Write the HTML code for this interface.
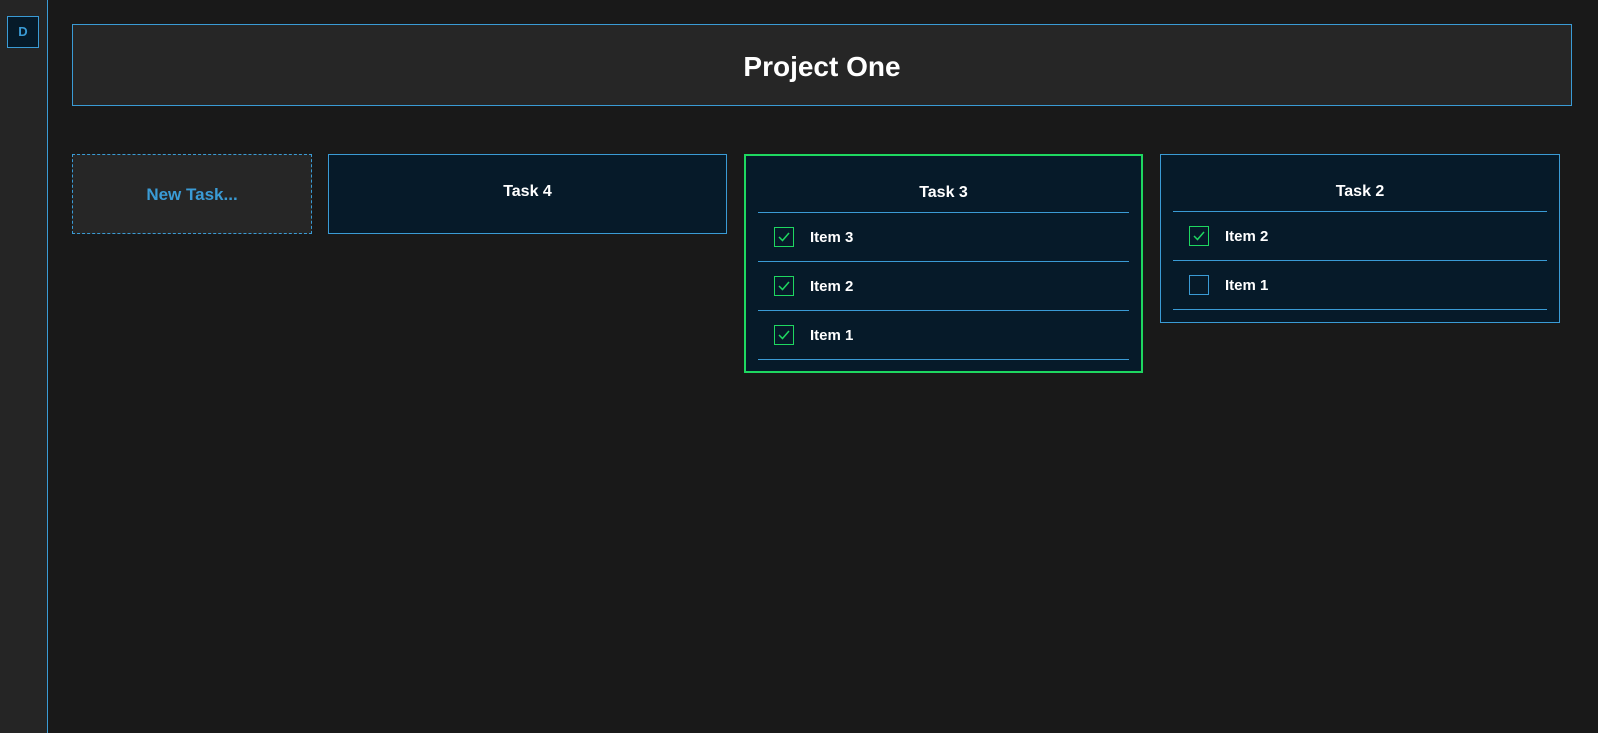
<!DOCTYPE html>
<html><head><style>
*{box-sizing:border-box;margin:0;padding:0}
body{width:1598px;height:733px;background:#191919;font-family:"Liberation Sans",sans-serif;position:relative;overflow:hidden;color:#fff}
.side{position:absolute;left:0;top:0;width:48px;height:733px;background:#252525;border-right:1px solid #3a9bd5}
.d{position:absolute;left:7px;top:16px;width:32px;height:32px;background:#061a29;border:1px solid #3a9bd5;color:#3a9bd5;font-weight:bold;font-size:13px;text-align:center;line-height:30px}
.hdr{position:absolute;left:72px;top:24px;width:1500px;height:82px;background:#262626;border:1px solid #3a9bd5;text-align:center;line-height:84px;font-size:28px;font-weight:bold}
.new{position:absolute;left:72px;top:154px;width:240px;height:80px;background:#262626;border:1px dashed #3a9bd5;color:#3a9bd5;font-weight:bold;font-size:17px;text-align:center;line-height:80px}
.card{position:absolute;top:154px;width:399px;background:#061a29;border:1px solid #3a9bd5;padding:0 12px}
.card h3{font-size:16px;text-align:center;height:57px;line-height:73px;border-bottom:1px solid #3a9bd5;overflow:hidden}
.card.g{border:2px solid #1ed760}
.row{height:49px;border-bottom:1px solid #3a9bd5;position:relative;font-weight:bold;font-size:15px}
.cb{position:absolute;left:16px;top:14px;width:20px;height:20px;border:1px solid #1ed760}
.cb.e{border-color:#3a9bd5}
.cb svg{position:absolute;left:3px;top:4px}
.row span{position:absolute;left:52px;top:16px}
</style></head><body>
<div class="side"><div class="d">D</div></div>
<div class="hdr">Project One</div>
<div class="new">New Task...</div>
<div class="card" style="left:328px;height:80px"><h3 style="border:none;height:auto">Task 4</h3></div>
<div class="card g" style="left:744px;height:219px">
<h3 style="height:57px">Task 3</h3>
<div class="row"><div class="cb"><svg width="12" height="10" viewBox="0 0 12 10"><path d="M1 5l3.5 3.5L11 1" stroke="#1ed760" stroke-width="1.5" fill="none"/></svg></div><span>Item 3</span></div>
<div class="row"><div class="cb"><svg width="12" height="10" viewBox="0 0 12 10"><path d="M1 5l3.5 3.5L11 1" stroke="#1ed760" stroke-width="1.5" fill="none"/></svg></div><span>Item 2</span></div>
<div class="row"><div class="cb"><svg width="12" height="10" viewBox="0 0 12 10"><path d="M1 5l3.5 3.5L11 1" stroke="#1ed760" stroke-width="1.5" fill="none"/></svg></div><span>Item 1</span></div>
</div>
<div class="card" style="left:1160px;width:400px;height:169px">
<h3>Task 2</h3>
<div class="row"><div class="cb"><svg width="12" height="10" viewBox="0 0 12 10"><path d="M1 5l3.5 3.5L11 1" stroke="#1ed760" stroke-width="1.5" fill="none"/></svg></div><span>Item 2</span></div>
<div class="row"><div class="cb e"></div><span>Item 1</span></div>
</div>
</body></html>
